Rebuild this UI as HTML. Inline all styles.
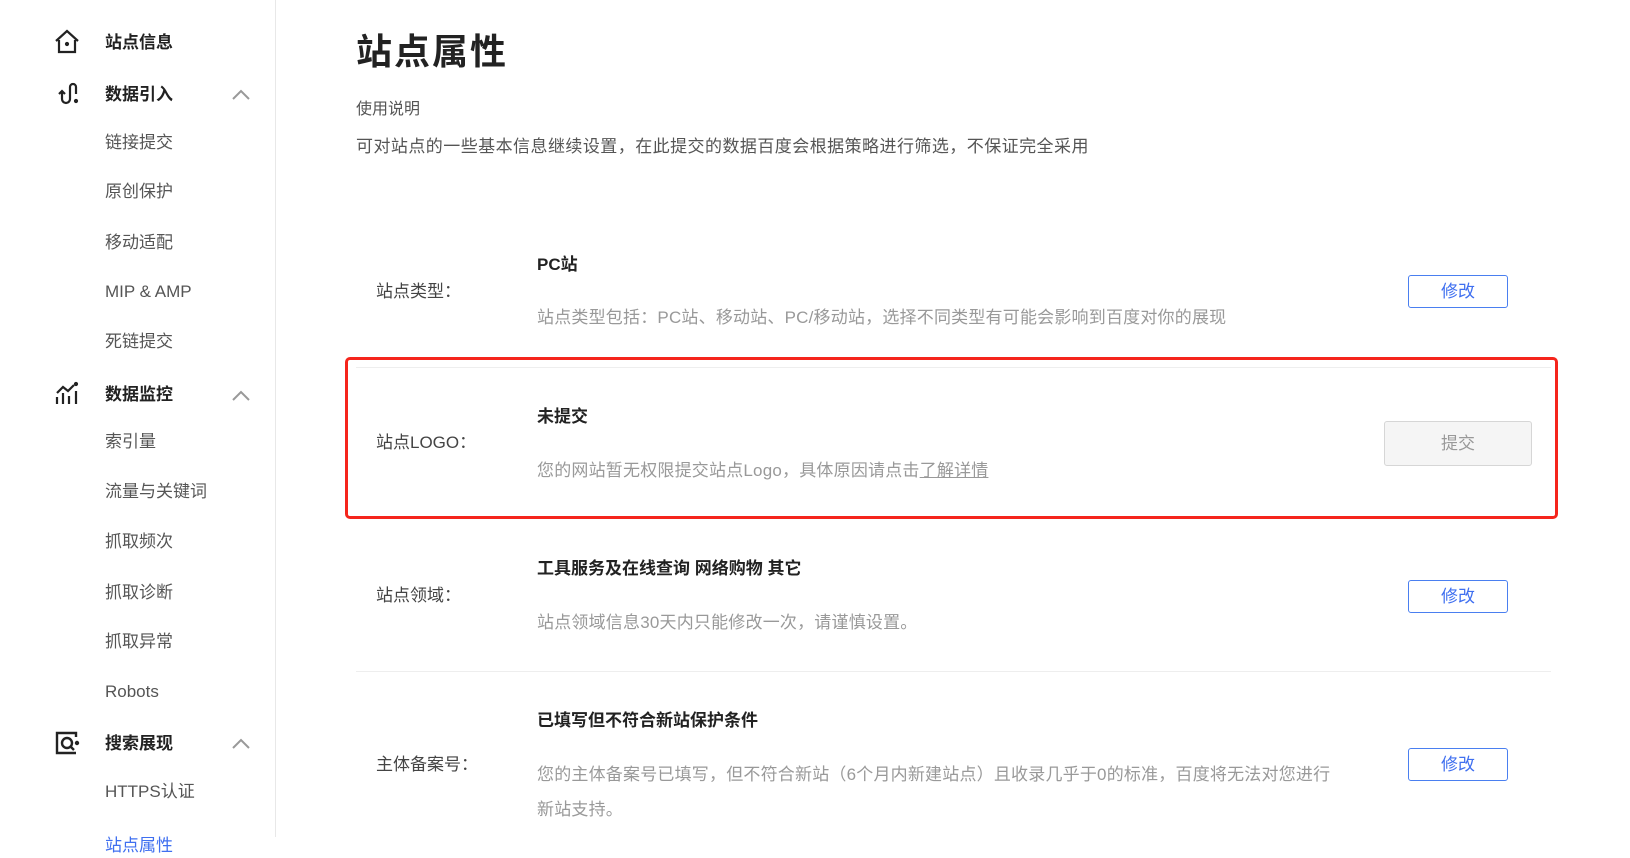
<!DOCTYPE html>
<html><head><meta charset="utf-8"><style>
*{margin:0;padding:0;box-sizing:border-box}
body{width:1630px;height:837px;overflow:hidden;background:#fff;font-family:"Liberation Sans","Noto Sans CJK SC",sans-serif;color:#333;position:relative}
.sb{position:absolute;left:0;top:0;width:276px;height:837px;border-right:1px solid #e8e8e8}
.it{position:absolute;left:105px;font-size:17px;color:#555;line-height:24px;white-space:nowrap}
.hd{font-weight:bold;color:#222}
.ic{position:absolute;left:54px;width:26px;height:26px}
.chev{position:absolute;left:231px;width:20px;height:12px}
.t{position:absolute;white-space:nowrap;line-height:24px}
.lab{left:376px;font-size:17px;color:#444}
.h{left:537px;font-size:17px;font-weight:bold;color:#222}
.d{left:537px;font-size:17px;color:#999;letter-spacing:0.2px}
.btn{position:absolute;left:1408px;width:100px;height:33px;border:1px solid #4a7ff0;border-radius:3px;color:#3f6ff0;font-size:17px;text-align:center;line-height:31px}
.line{position:absolute;left:356px;width:1195px;height:1px;background:#eee}
</style></head><body>
<div class="sb">
<svg class="ic" style="top:29px" viewBox="0 0 26 26" fill="none" stroke="#222" stroke-width="2.2"><path d="M2 12 L13 2 L24 12 M5 11 V23 H21 V11"/><circle cx="13" cy="15" r="1" fill="#222"/></svg>
<div class="it hd" style="top:31px">站点信息</div>
<svg class="ic" style="top:80px" viewBox="0 0 26 26" fill="none" stroke="#222" stroke-width="2.2"><path d="M5 14 L8 11 L11 14 M8 12 V19 a4 4 0 0 0 8 0 V7 a3 3 0 0 1 6 0 V14"/><circle cx="22" cy="21" r="1" fill="#222"/></svg>
<div class="it hd" style="top:83px">数据引入</div>
<svg class="chev" style="top:89px" viewBox="0 0 20 12" fill="none" stroke="#999" stroke-width="2"><path d="M2 10 L10 2 L18 10"/></svg>
<div class="it" style="top:131px">链接提交</div>
<div class="it" style="top:180px">原创保护</div>
<div class="it" style="top:231px">移动适配</div>
<div class="it" style="top:280px">MIP &amp; AMP</div>
<div class="it" style="top:330px">死链提交</div>
<svg class="ic" style="top:381px" viewBox="0 0 26 26" fill="none" stroke="#222" stroke-width="2.2"><path d="M3 12 L9 6 L14 10 L20 4 M3 16 V23 M9 12 V23 M15 15 V23 M22 10 V23"/><circle cx="22" cy="3" r="1" fill="#222"/></svg>
<div class="it hd" style="top:383px">数据监控</div>
<svg class="chev" style="top:390px" viewBox="0 0 20 12" fill="none" stroke="#999" stroke-width="2"><path d="M2 10 L10 2 L18 10"/></svg>
<div class="it" style="top:430px">索引量</div>
<div class="it" style="top:480px">流量与关键词</div>
<div class="it" style="top:530px">抓取频次</div>
<div class="it" style="top:581px">抓取诊断</div>
<div class="it" style="top:630px">抓取异常</div>
<div class="it" style="top:680px">Robots</div>
<svg class="ic" style="top:730px" viewBox="0 0 26 26" fill="none" stroke="#222" stroke-width="2.4"><path d="M22 7 V3 H3 V23 H22"/><circle cx="13" cy="13" r="5"/><path d="M16 16 L20 20"/><circle cx="23" cy="13" r="1" fill="#222"/></svg>
<div class="it hd" style="top:732px">搜索展现</div>
<svg class="chev" style="top:738px" viewBox="0 0 20 12" fill="none" stroke="#999" stroke-width="2"><path d="M2 10 L10 2 L18 10"/></svg>
<div class="it" style="top:780px">HTTPS认证</div>
<div class="it" style="top:834px;color:#3f6ff0">站点属性</div>
</div>

<div class="t" style="left:356px;top:30px;font-size:36px;line-height:44px;font-weight:bold;color:#222;letter-spacing:2px">站点属性</div>
<div class="t" style="left:356px;top:98px;font-size:16px;color:#555">使用说明</div>
<div class="t" style="left:356px;top:135px;font-size:17px;color:#555;letter-spacing:0.45px">可对站点的一些基本信息继续设置，在此提交的数据百度会根据策略进行筛选，不保证完全采用</div>

<div class="t h" style="top:253px">PC站</div>
<div class="t lab" style="top:280px">站点类型：</div>
<div class="t d" style="top:306px">站点类型包括：PC站、移动站、PC/移动站，选择不同类型有可能会影响到百度对你的展现</div>
<div class="btn" style="top:275px">修改</div>

<div class="line" style="top:367px"></div>
<div class="t h" style="top:405px">未提交</div>
<div class="t lab" style="top:431px">站点LOGO：</div>
<div class="t d" style="top:459px">您的网站暂无权限提交站点Logo，具体原因请点击<span style="text-decoration:underline">了解详情</span></div>
<div style="position:absolute;left:1384px;top:421px;width:148px;height:45px;border:1px solid #d6d6d6;border-radius:3px;background:#f5f5f5;color:#999;font-size:17px;text-align:center;line-height:43px">提交</div>
<div style="position:absolute;left:345px;top:357px;width:1213px;height:162px;border:3px solid #f5251c;border-radius:5px"></div>

<div class="t h" style="top:557px">工具服务及在线查询 网络购物 其它</div>
<div class="t lab" style="top:584px">站点领域：</div>
<div class="t d" style="top:611px">站点领域信息30天内只能修改一次，请谨慎设置。</div>
<div class="btn" style="top:580px">修改</div>

<div class="line" style="top:671px"></div>
<div class="t h" style="top:709px">已填写但不符合新站保护条件</div>
<div class="t lab" style="top:753px">主体备案号：</div>
<div class="t d" style="top:763px">您的主体备案号已填写，但不符合新站（6个月内新建站点）且收录几乎于0的标准，百度将无法对您进行</div>
<div class="t d" style="top:798px">新站支持。</div>
<div class="btn" style="top:748px">修改</div>
</body></html>
